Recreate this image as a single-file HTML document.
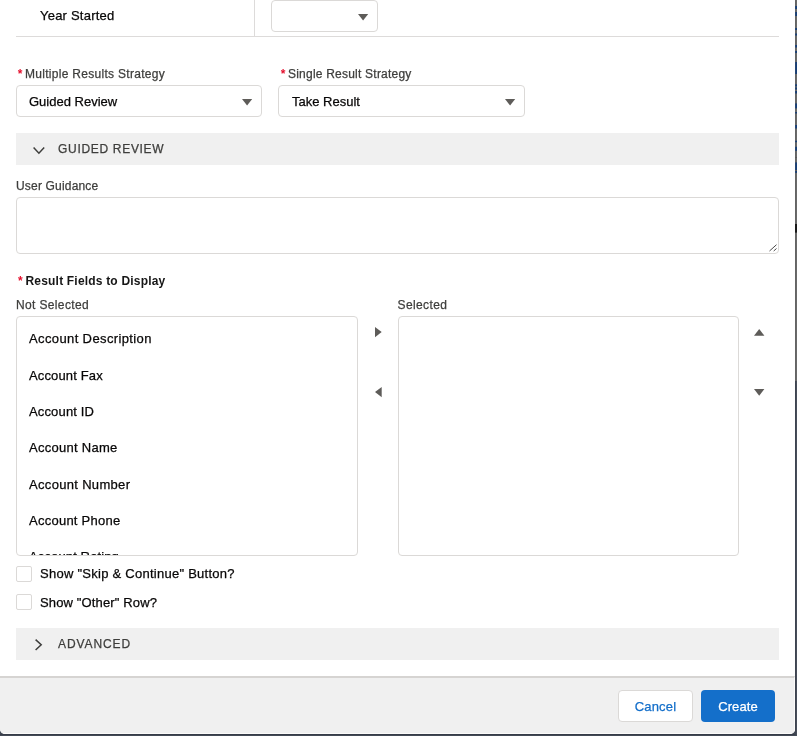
<!DOCTYPE html>
<html lang="en">
<head>
<meta charset="utf-8">
<title>Guided Review</title>
<style>
*{box-sizing:border-box;margin:0;padding:0}
html,body{width:797px;height:736px;overflow:hidden;background:#6a6a6a;font-family:"Liberation Sans",sans-serif;color:#080707}
#bd1{position:absolute;left:0;top:381px;width:797px;height:355px;background:#434a55}
#modal{will-change:transform;position:absolute;left:0;top:0;width:795px;height:734px;background:#fff;border-radius:0 0 5px 5px;overflow:hidden}
.abs{position:absolute;white-space:nowrap}
.abs,.sec span,.btn{-webkit-text-stroke-width:.25px}
.t13{font-size:13px;line-height:16px;color:#080707}
.t12{font-size:12px;line-height:14px;color:#3e3e3c}
.req{position:absolute;font-size:12px;line-height:14px;font-weight:bold;color:#e4102d}
.box{position:absolute;background:#fff;border:1px solid #dbd9d7;border-radius:4px}
.sec{position:absolute;left:16px;width:763px;height:32px;background:#f0f0f0}
.sec span{position:absolute;left:42px;top:9px;font-size:12px;line-height:14px;color:#3e3e3c;white-space:nowrap}
.cb{position:absolute;left:16px;width:16px;height:16px;border:1px solid #dbd9d7;border-radius:2px;background:#fff}
#footer{position:absolute;left:0;top:676px;width:795px;height:58px;background:#f0f0f0;border-top:2px solid #d6d4d2;border-bottom:1px solid #fcfbfa;border-right:1px solid #fcfbfa}
.btn{position:absolute;top:690px;height:32px;border-radius:4px;font-size:13px;line-height:34px;text-align:center;white-space:nowrap}
svg{position:absolute;overflow:visible}
</style>
</head>
<body>
<div id="bd1"></div>
<div style="position:absolute;left:0;top:734px;width:797px;height:1px;background:#363c48"></div>
<div style="position:absolute;left:795px;top:0;width:1px;height:381px;background:#646464"></div>
<div style="position:absolute;left:795px;top:381px;width:1px;height:354px;background:#3e4450"></div>
<div style="position:absolute;left:796px;top:381px;width:1px;height:355px;background:#484e5a"></div>
<svg id="strip" style="left:795px;top:0" width="2" height="736"><rect x="0.2" y="6" width="1.8" height="3" fill="#173f78"/><rect x="0.2" y="12" width="1.8" height="4" fill="#173f78"/><rect x="0.2" y="28" width="1.8" height="2" fill="#173f78"/><rect x="0.2" y="33.5" width="1.8" height="2" fill="#173f78"/><rect x="0.2" y="45" width="1.8" height="2.5" fill="#173f78"/><rect x="0.2" y="51" width="1.8" height="2" fill="#173f78"/><rect x="0.2" y="62" width="1.8" height="12" fill="#173f78"/><rect x="0.2" y="84.3" width="1.8" height="2" fill="#173f78"/><rect x="0.2" y="87.5" width="1.8" height="2" fill="#173f78"/><rect x="0.2" y="91" width="1.8" height="2.5" fill="#173f78"/><rect x="0.2" y="103.4" width="1.8" height="5" fill="#173f78"/><rect x="0.2" y="112" width="1.8" height="1.5" fill="#173f78"/><rect x="0.2" y="125" width="1.8" height="3.5" fill="#173f78"/><rect x="0.2" y="140.7" width="1.8" height="1.5" fill="#173f78"/><rect x="0.2" y="146.8" width="1.8" height="4" fill="#173f78"/><rect x="0.2" y="162.4" width="1.8" height="10.5" fill="#173f78"/><rect x="0" y="157" width="2" height="1" fill="#5a5a5a"/><rect x="0" y="170" width="2" height="1" fill="#5a5a5a"/><rect x="0" y="224" width="2" height="8.6" fill="#1a1a1a"/></svg>
<div id="modal">
  <div class="abs t13" style="left:40px;top:8px;letter-spacing:.22px">Year Started</div>
  <div class="abs" style="left:254px;top:0;width:1px;height:36px;background:#dddbda"></div>
  <div class="box" style="left:271px;top:0;width:107px;height:32px"></div>
  <svg style="left:357.8px;top:13.6px" width="10.2" height="6.6"><path d="M0 0h10.2l-5.1 6.6z" fill="#5e5c59"/></svg>
  <div class="abs" style="left:16px;top:36px;width:763px;height:1px;background:#dddbda"></div>

  <div class="req" style="left:17.8px;top:67px">*</div>
  <div class="abs t12" style="left:25px;top:67px;letter-spacing:.29px">Multiple Results Strategy</div>
  <div class="req" style="left:280.8px;top:67px">*</div>
  <div class="abs t12" style="left:288px;top:67px;letter-spacing:.22px">Single Result Strategy</div>
  <div class="box" style="left:16px;top:85px;width:246px;height:32px"></div>
  <div class="abs t13" style="left:29px;top:94px">Guided Review</div>
  <svg style="left:241.9px;top:98.5px" width="10.2" height="6.6"><path d="M0 0h10.2l-5.1 6.6z" fill="#5e5c59"/></svg>
  <div class="box" style="left:278px;top:85px;width:247px;height:32px"></div>
  <div class="abs t13" style="left:292px;top:94px">Take Result</div>
  <svg style="left:504.9px;top:98.5px" width="10.2" height="6.6"><path d="M0 0h10.2l-5.1 6.6z" fill="#5e5c59"/></svg>

  <div class="sec" style="top:133px"><span style="letter-spacing:.69px">GUIDED REVIEW</span>
    <svg style="left:17.4px;top:13.6px" width="11.8" height="7"><path d="M0.6 0.6l5.3 5.6 5.3-5.6" fill="none" stroke="#3e3e3c" stroke-width="1.5"/></svg>
  </div>

  <div class="abs t12" style="left:16px;top:179px;letter-spacing:.18px">User Guidance</div>
  <div class="box" style="left:16px;top:197px;width:763px;height:57px"></div>
  <svg style="left:768.7px;top:244.4px" width="8" height="8"><path d="M0.5 7L7.5 0.7M4.7 7L7.5 4.5" stroke="#4a4a4a" stroke-width="1" fill="none"/></svg>

  <div class="req" style="left:17.9px;top:274px">*</div>
  <div class="abs t12" style="left:25.5px;top:274px;font-weight:bold;color:#161616;letter-spacing:.19px;-webkit-text-stroke-width:0">Result Fields to Display</div>
  <div class="abs t12" style="left:16px;top:298px;letter-spacing:.36px">Not Selected</div>
  <div class="abs t12" style="left:397.6px;top:298px;letter-spacing:.37px">Selected</div>

  <div class="box" style="left:16px;top:316px;width:342px;height:240px;overflow:hidden">
    <div class="abs t13" style="left:12px;top:14px;letter-spacing:.38px">Account Description</div>
    <div class="abs t13" style="left:12px;top:51px;letter-spacing:.14px">Account Fax</div>
    <div class="abs t13" style="left:12px;top:87px;letter-spacing:.15px">Account ID</div>
    <div class="abs t13" style="left:12px;top:123px;letter-spacing:.27px">Account Name</div>
    <div class="abs t13" style="left:12px;top:160px;letter-spacing:.32px">Account Number</div>
    <div class="abs t13" style="left:12px;top:196px;letter-spacing:.25px">Account Phone</div>
    <div class="abs t13" style="left:12px;top:232px;letter-spacing:.13px">Account Rating</div>
  </div>
  <div class="box" style="left:398px;top:316px;width:341px;height:240px"></div>

  <svg style="left:374.7px;top:326.8px" width="6.7" height="10.2"><path d="M0 0v10.2l6.7-5.1z" fill="#5e5c59"/></svg>
  <svg style="left:374.7px;top:386.9px" width="6.7" height="10.2"><path d="M6.7 0v10.2l-6.7-5.1z" fill="#5e5c59"/></svg>
  <svg style="left:753.8px;top:328.6px" width="10.4" height="6.7"><path d="M0 6.7h10.4l-5.2-6.7z" fill="#5e5c59"/></svg>
  <svg style="left:753.8px;top:388.6px" width="10.4" height="6.7"><path d="M0 0h10.4l-5.2 6.7z" fill="#5e5c59"/></svg>

  <div class="cb" style="top:566px"></div>
  <div class="abs t13" style="left:40px;top:566px;letter-spacing:.26px">Show "Skip &amp; Continue" Button?</div>
  <div class="cb" style="top:594px"></div>
  <div class="abs t13" style="left:40px;top:595px;letter-spacing:.14px">Show "Other" Row?</div>

  <div class="sec" style="top:628px"><span style="letter-spacing:.9px">ADVANCED</span>
    <svg style="left:19.4px;top:11px" width="7" height="11.6"><path d="M0.6 0.6l5.6 5.2-5.6 5.2" fill="none" stroke="#3e3e3c" stroke-width="1.5"/></svg>
  </div>

  <div id="footer"></div>
  <div class="btn" style="left:618px;width:75px;background:#fff;border:1px solid #dbd9d7;color:#146fca;line-height:32px;letter-spacing:.2px">Cancel</div>
  <div class="btn" style="left:701px;width:74px;background:#146fca;color:#fff;letter-spacing:.1px">Create</div>
</div>
</body>
</html>
